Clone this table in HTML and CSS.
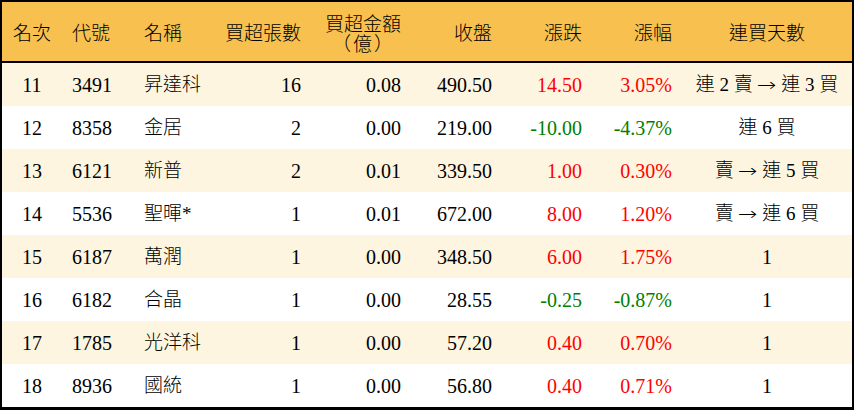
FILE: index.html
```html
<!DOCTYPE html>
<html lang="zh-Hant">
<head>
<meta charset="utf-8">
<title>買超排行</title>
<link rel="stylesheet" href="styles.css">
</head>
<body>
<div class="board">
  <div class="row head">
    <div class="c center">名次</div>
    <div class="c left">代號</div>
    <div class="c left">名稱</div>
    <div class="c right">買超張數</div>
    <div class="c right two"><span>買超金額</span><span class="paren">（億）</span></div>
    <div class="c right">收盤</div>
    <div class="c right">漲跌</div>
    <div class="c right">漲幅</div>
    <div class="c center">連買天數</div>
  </div>

  <div class="row odd">
    <div class="c center num">11</div><div class="c left num">3491</div><div class="c left zh">昇達科</div>
    <div class="c right num">16</div><div class="c right num">0.08</div><div class="c right num">490.50</div>
    <div class="c right num up">14.50</div><div class="c right num up">3.05%</div><div class="c center zh">連 2 賣 <span class="arr">→</span> 連 3 買</div>
  </div>
  <div class="row">
    <div class="c center num">12</div><div class="c left num">8358</div><div class="c left zh">金居</div>
    <div class="c right num">2</div><div class="c right num">0.00</div><div class="c right num">219.00</div>
    <div class="c right num down">-10.00</div><div class="c right num down">-4.37%</div><div class="c center zh">連 6 買</div>
  </div>
  <div class="row odd">
    <div class="c center num">13</div><div class="c left num">6121</div><div class="c left zh">新普</div>
    <div class="c right num">2</div><div class="c right num">0.01</div><div class="c right num">339.50</div>
    <div class="c right num up">1.00</div><div class="c right num up">0.30%</div><div class="c center zh">賣 <span class="arr">→</span> 連 5 買</div>
  </div>
  <div class="row">
    <div class="c center num">14</div><div class="c left num">5536</div><div class="c left zh">聖暉*</div>
    <div class="c right num">1</div><div class="c right num">0.01</div><div class="c right num">672.00</div>
    <div class="c right num up">8.00</div><div class="c right num up">1.20%</div><div class="c center zh">賣 <span class="arr">→</span> 連 6 買</div>
  </div>
  <div class="row odd">
    <div class="c center num">15</div><div class="c left num">6187</div><div class="c left zh">萬潤</div>
    <div class="c right num">1</div><div class="c right num">0.00</div><div class="c right num">348.50</div>
    <div class="c right num up">6.00</div><div class="c right num up">1.75%</div><div class="c center num">1</div>
  </div>
  <div class="row">
    <div class="c center num">16</div><div class="c left num">6182</div><div class="c left zh">合晶</div>
    <div class="c right num">1</div><div class="c right num">0.00</div><div class="c right num">28.55</div>
    <div class="c right num down">-0.25</div><div class="c right num down">-0.87%</div><div class="c center num">1</div>
  </div>
  <div class="row odd">
    <div class="c center num">17</div><div class="c left num">1785</div><div class="c left zh">光洋科</div>
    <div class="c right num">1</div><div class="c right num">0.00</div><div class="c right num">57.20</div>
    <div class="c right num up">0.40</div><div class="c right num up">0.70%</div><div class="c center num">1</div>
  </div>
  <div class="row">
    <div class="c center num">18</div><div class="c left num">8936</div><div class="c left zh">國統</div>
    <div class="c right num">1</div><div class="c right num">0.00</div><div class="c right num">56.80</div>
    <div class="c right num up">0.40</div><div class="c right num up">0.71%</div><div class="c center num">1</div>
  </div>
</div>
</body>
</html>
```

FILE: styles.css
```css
html, body {
  margin: 0;
  padding: 0;
  background: #fff;
}

.board {
  box-sizing: border-box;
  width: 854px;
  height: 410px;
  border: 2px solid #000;
  border-bottom-width: 3px;
  background: #fff;
  color: #000;
  font-family: "Liberation Serif", "Noto Sans CJK TC", serif;
  font-size: 20px;
}

.row {
  display: grid;
  grid-template-columns: 60px 73px 80px 96px 100px 91px 90px 90px 170px;
  height: 43px;
  align-items: center;
}

.row.odd {
  background: #fdf5e0;
}

.row.head {
  height: 59px;
  background: #f7c04f;
  border-bottom: 2px solid #000;
  font-family: "Noto Sans CJK TC", sans-serif;
  font-size: 19px;
  font-weight: 300;
}

.c {
  white-space: nowrap;
  line-height: 20px;
}

.center { text-align: center; }
.left { text-align: left; padding-left: 10px; }
.right { text-align: right; padding-right: 10px; }

.row .c:nth-child(3).left { padding-left: 9px; }

.two {
  display: flex;
  flex-direction: column;
  align-items: flex-end;
  line-height: 20px;
  gap: 0;
  margin-top: 2px;
}

.paren {
  letter-spacing: 2px;
  margin-right: 6px;
  line-height: 19px;
}

.zh {
  font-family: "Liberation Serif", "Noto Sans CJK TC", serif;
  font-size: 19px;
  font-weight: 300;
}

.arr {
  font-family: "DejaVu Sans", sans-serif;
  font-size: 18px;
  font-weight: 200;
  display: inline-block;
  transform: scaleX(1.3);
  margin: 0 2px;
}

.up { color: #ff0000; }
.down { color: #008000; }
```
